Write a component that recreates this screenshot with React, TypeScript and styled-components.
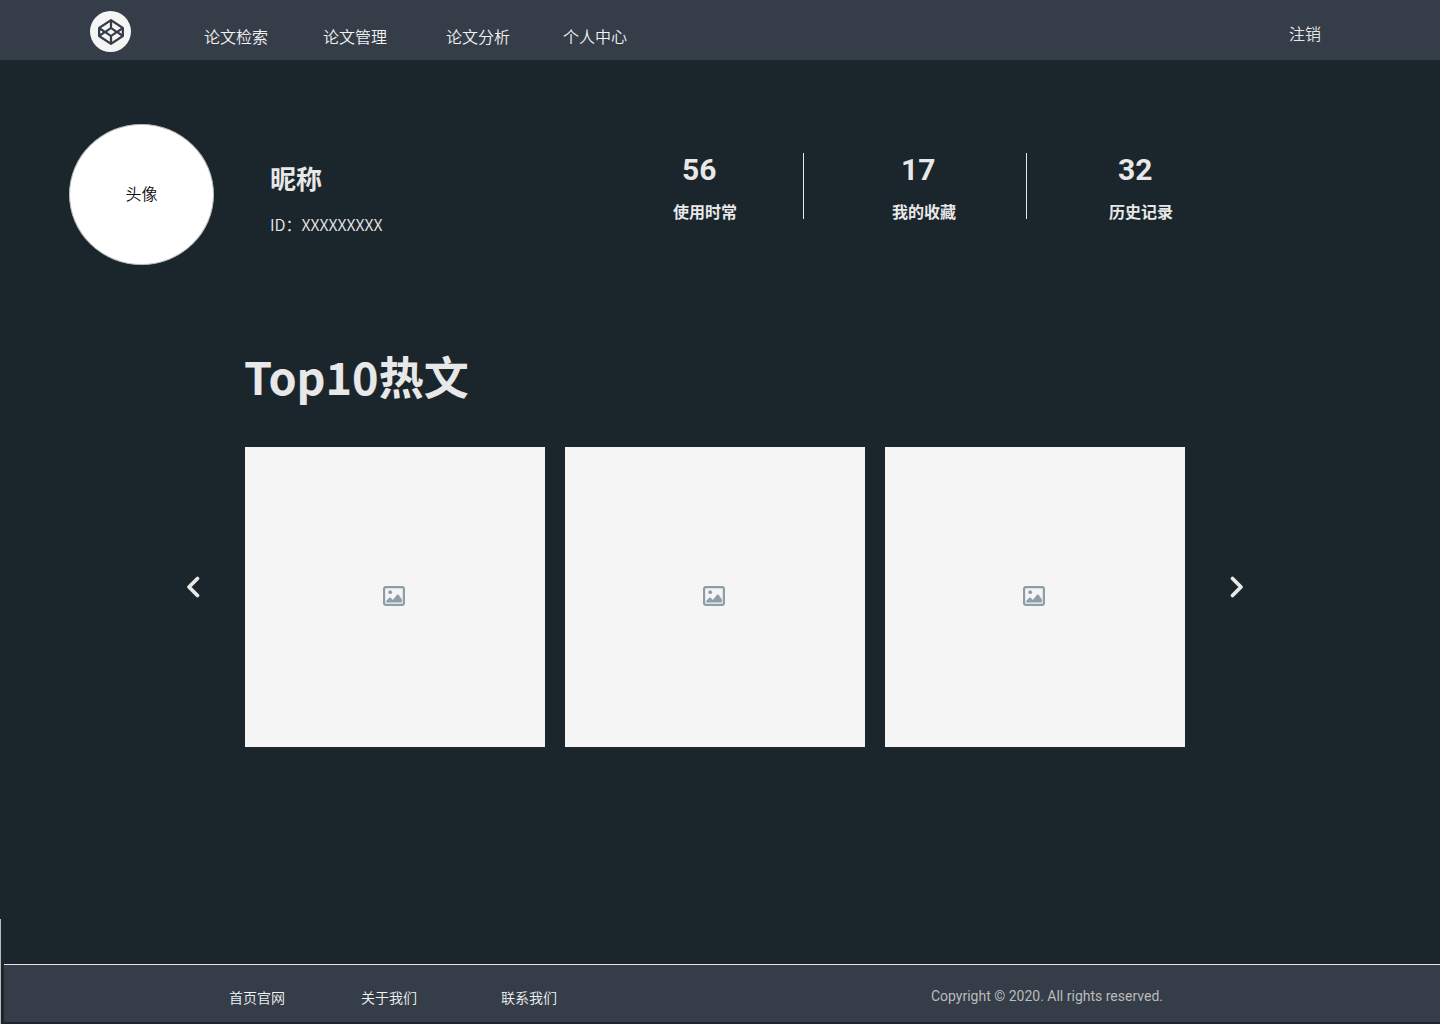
import React from "react";
import styled, { createGlobalStyle } from "styled-components";
import { FaCodepen } from "react-icons/fa";

const ink = "#1b262c";
const bar = "#353d49";
const text = "#e8e8e8";
const cjk = `"Noto Sans CJK SC", "Noto Sans", sans-serif`;

const GlobalStyle = createGlobalStyle`
  *, *::before, *::after { box-sizing: border-box; }
  body {
    margin: 0;
    background: ${ink};
    color: ${text};
    font: 350 16px/24px ${cjk};
  }
`;

const Page = styled.div`
  min-height: 100vh;
  display: flex;
  flex-direction: column;
`;

const Header = styled.header`
  height: 60px;
  padding: 11px 119px 0 90px;
  display: flex;
  align-items: flex-start;
  background: ${bar};
`;

const Logo = styled.a`
  width: 41px;
  height: 41px;
  border-radius: 50%;
  display: grid;
  place-items: center;
  background: #f5f5f5;
  color: ${bar};
`;

const TextLink = styled.a<{ $small?: boolean }>`
  color: #f2f2f2;
  text-decoration: none;
  white-space: nowrap;
  font-size: ${(p) => (p.$small ? "14px" : "16px")};
`;

const Nav = styled.nav`
  display: grid;
  grid-template-columns: 119px 123px 117px auto;
  margin-left: 73px;
  padding-top: 13px;
`;

const Logout = styled.button`
  margin: 0 0 0 auto;
  padding: 10px 0 0;
  border: 0;
  background: none;
  color: ${text};
  font: inherit;
  cursor: pointer;
`;

const Main = styled.main`
  flex: 1;
`;

const Profile = styled.section`
  display: flex;
  align-items: flex-start;
  padding: 64px 267px 0 69px;
`;

const Avatar = styled.div`
  width: 145px;
  height: 141px;
  padding-bottom: 3px;
  border: 1px solid #bbb;
  border-radius: 50%;
  display: grid;
  place-items: center;
  background: #fff;
  color: #101010;
`;

const Identity = styled.div`
  margin-left: 56px;
  padding-top: 34px;
`;

const Nickname = styled.h1`
  margin: 0 0 14px;
  font-size: 26px;
  line-height: 40px;
  font-weight: 700;
`;

const UserId = styled.p`
  margin: 0;
`;

const Stats = styled.div`
  display: grid;
  grid-template-columns: 130px 89px 134px 83px auto;
  margin-left: auto;
  padding-top: 29px;
`;

const Divider = styled.div`
  width: 1px;
  height: 66px;
  background: ${text};
`;

const Stat = styled.div`
  font-weight: 700;
  white-space: nowrap;
`;

const StatValue = styled.div`
  padding-left: 9px;
  margin-bottom: 12px;
  font: 700 30px/34px Roboto, sans-serif;
`;

const Featured = styled.section`
  padding: 78px 196px 0 186px;
`;

const SectionTitle = styled.h2`
  margin: 0 58px 39px;
  font-size: 45px;
  line-height: 65px;
  font-weight: 700;
`;

const Carousel = styled.div`
  display: flex;
  gap: 44px;
`;

const Arrow = styled.button`
  flex: none;
  display: flex;
  align-items: center;
  padding: 0 0 20px;
  border: 0;
  background: none;
  color: ${text};
  cursor: pointer;
`;

const Cards = styled.div`
  flex: 1;
  display: grid;
  grid-template-columns: repeat(3, 1fr);
  gap: 20px;
`;

const Card = styled.article`
  aspect-ratio: 1;
  display: grid;
  place-items: center;
  padding: 0 2px 2px 0;
  background: #f5f5f5;
  color: #8c9fa9;
`;

const FooterFrame = styled.div`
  border-left: 1px solid #bbb;
  padding: 45px 0 2px 3px;
`;

const Footer = styled.footer`
  height: 58px;
  border-top: 1px solid ${text};
  padding: 19px 277px 0 225px;
  display: flex;
  justify-content: space-between;
  background: ${bar};
`;

const FooterNav = styled.nav`
  display: grid;
  grid-template-columns: 132px 140px auto;
  padding-top: 1px;
`;

const Copyright = styled.p`
  margin: 0;
  color: #bbb;
  font: 14px/24px Roboto, sans-serif;
`;

function Chevron({ points }: { points: string }) {
  return (
    <svg width="15" height="24" viewBox="0 0 15 24" fill="none" aria-hidden="true">
      <polyline
        points={points}
        stroke="currentColor"
        strokeWidth="3.8"
        strokeLinecap="round"
        strokeLinejoin="round"
      />
    </svg>
  );
}

function PictureIcon() {
  return (
    <svg width="22" height="20" viewBox="0 0 22 20" aria-hidden="true">
      <rect x="1.1" y="1.1" width="19.8" height="17.8" rx="1.8" fill="none" stroke="currentColor" strokeWidth="2.2" />
      <circle cx="7.2" cy="6.2" r="1.9" fill="currentColor" />
      <path
        d="M3.2 16.6V15l3.1-3.3q.7-.6 1.4 0L9.8 14l4.2-5.2q.8-.8 1.6 0l3.3 4.8v3z"
        fill="currentColor"
      />
    </svg>
  );
}

const navItems = ["论文检索", "论文管理", "论文分析", "个人中心"];
const footerItems = ["首页官网", "关于我们", "联系我们"];
const stats = [
  { value: 56, label: "使用时常" },
  { value: 17, label: "我的收藏" },
  { value: 32, label: "历史记录" },
];

export default function App() {
  return (
    <Page>
      <GlobalStyle />
      <Header>
        <Logo href="#" aria-label="CodePen">
          <FaCodepen size={26} />
        </Logo>
        <Nav>
          {navItems.map((item) => (
            <TextLink key={item} href="#">{item}</TextLink>
          ))}
        </Nav>
        <Logout type="button">注销</Logout>
      </Header>

      <Main>
        <Profile>
          <Avatar>头像</Avatar>
          <Identity>
            <Nickname>昵称</Nickname>
            <UserId>ID：XXXXXXXXX</UserId>
          </Identity>
          <Stats>
            {stats.map((stat, i) => (
              <React.Fragment key={stat.label}>
                {i > 0 && <Divider />}
                <Stat>
                  <StatValue>{stat.value}</StatValue>
                  {stat.label}
                </Stat>
              </React.Fragment>
            ))}
          </Stats>
        </Profile>

        <Featured>
          <SectionTitle>Top10热文</SectionTitle>
          <Carousel>
            <Arrow type="button" aria-label="上一页">
              <Chevron points="11.5,3.5 3,12 11.5,20.5" />
            </Arrow>
            <Cards>
              {[1, 2, 3].map((n) => (
                <Card key={n}><PictureIcon /></Card>
              ))}
            </Cards>
            <Arrow type="button" aria-label="下一页">
              <Chevron points="3.5,3.5 12,12 3.5,20.5" />
            </Arrow>
          </Carousel>
        </Featured>
      </Main>

      <FooterFrame>
        <Footer>
          <FooterNav>
            {footerItems.map((item) => (
              <TextLink key={item} href="#" $small>{item}</TextLink>
            ))}
          </FooterNav>
          <Copyright>Copyright © 2020. All rights reserved.</Copyright>
        </Footer>
      </FooterFrame>
    </Page>
  );
}
